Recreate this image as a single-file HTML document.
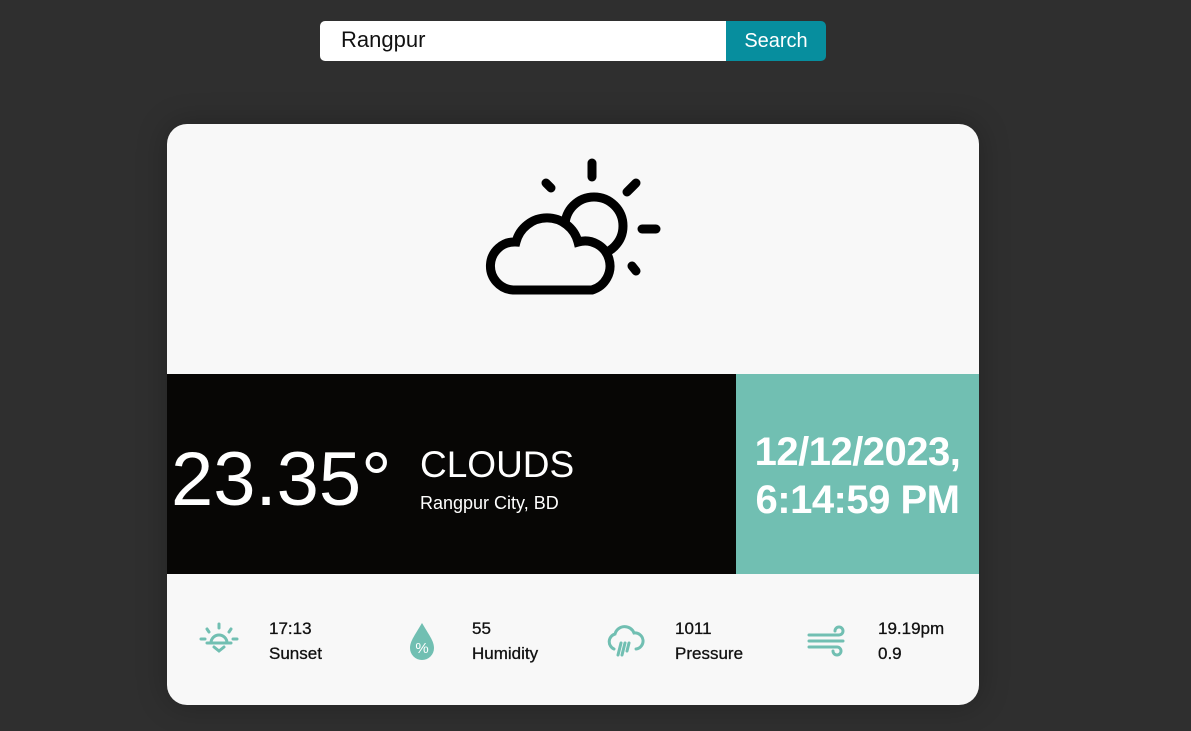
<!DOCTYPE html>
<html><head><style>
*{margin:0;padding:0;box-sizing:border-box}
body{width:1191px;height:731px;background:#2f2f2f;font-family:"Liberation Sans",sans-serif;position:relative;overflow:hidden}
.search{position:absolute;left:320px;top:21px;width:406px;height:40px;background:#fff;border-radius:5px 0 0 5px;font-size:22px;padding:6px 0 0 21px;color:#111}
.btn{position:absolute;left:726px;top:21px;width:100px;height:40px;background:#078e9e;border-radius:0 5px 5px 0;color:#fff;font-size:20px;text-align:center;line-height:40px}
.card{position:absolute;left:167px;top:124px;width:812px;height:581px;background:#f8f8f8;border-radius:20px;overflow:hidden;box-shadow:0 0 30px rgba(0,0,0,.25)}
.blk{position:absolute;left:0;top:250px;width:569px;height:200px;background:#070605;color:#fff}
.teal{position:absolute;left:569px;top:250px;width:243px;height:200px;background:#71bfb2;color:#fff;font-weight:bold;font-size:40px;text-align:center;line-height:48px;padding-top:54px;letter-spacing:-0.5px}
.temp{position:absolute;left:4px;top:62px;font-size:76px;font-weight:300}
.cond{position:absolute;left:253px;top:70px;font-size:37px;font-weight:300}
.city{position:absolute;left:253px;top:119px;font-size:18px}
.it{position:absolute;top:492px;font-size:17px;line-height:25px;color:#111;-webkit-text-stroke:0.3px #111}
.ic{position:absolute;top:497px}
</style></head><body>
<div class="search">Rangpur</div><div class="btn">Search</div>
<div class="card">
<svg style="position:absolute;left:0;top:0" width="812" height="250">
<g stroke="#000" stroke-width="9" stroke-linecap="round" fill="none" transform="translate(-167,-124)">
<line x1="592" y1="163" x2="592" y2="177"/>
<line x1="546" y1="183" x2="551" y2="188"/>
<line x1="627" y1="192" x2="636" y2="183"/>
<line x1="642" y1="229" x2="656" y2="229"/>
<line x1="632" y1="266" x2="636" y2="271"/>
<circle cx="594" cy="226" r="29"/>
<path d="M513,290 A24,24 0 0 1 516,242 A32,32 0 0 1 578,242 A25,25 0 0 1 592,290 Z" fill="#f8f8f8"/>
</g></svg>
<div class="blk"><div class="temp">23.35°</div><div class="cond">CLOUDS</div><div class="city">Rangpur City, BD</div></div>
<div class="teal">12/12/2023,<br>6:14:59 PM</div>
<svg class="ic" style="left:32px" width="40" height="40" viewBox="0 0 40 40"><g stroke="#71bfb2" stroke-width="3" fill="none" stroke-linecap="round"><path d="M12,22 A8,8 0 1 1 28,22"/><line x1="8" y1="22" x2="32" y2="22"/><line x1="20" y1="3" x2="20" y2="7"/><line x1="8" y1="8" x2="10" y2="11"/><line x1="32" y1="8" x2="30" y2="11"/><line x1="2" y1="18" x2="6" y2="18"/><line x1="34" y1="18" x2="38" y2="18"/><path d="M15,26 L20,30 L25,26"/></g></svg>
<div class="it" style="left:102px">17:13<br>Sunset</div>
<svg class="ic" style="left:238px" width="34" height="40" viewBox="0 0 34 40"><path d="M17,2 C10,14 5,20 5,27 A12,12 0 0 0 29,27 C29,20 24,14 17,2Z" fill="#71bfb2"/><text x="17" y="32" font-size="15" fill="#fff" text-anchor="middle" font-family="Liberation Sans">%</text></svg>
<div class="it" style="left:305px">55<br>Humidity</div>
<svg class="ic" style="left:438px" width="40" height="40" viewBox="0 0 40 40"><g stroke="#71bfb2" stroke-width="3" fill="none" stroke-linecap="round"><path d="M9,28 A8,8 0 0 1 10,13 A10,10 0 0 1 29,12 A8,8 0 0 1 31,28"/><line x1="16" y1="22" x2="13" y2="34"/><line x1="20" y1="22" x2="17" y2="34"/><line x1="24" y1="22" x2="22" y2="30"/></g></svg>
<div class="it" style="left:508px">1011<br>Pressure</div>
<svg class="ic" style="left:638px" width="44" height="40" viewBox="0 0 44 40"><g stroke="#71bfb2" stroke-width="3" fill="none" stroke-linecap="round"><path d="M4,14 H34 A4,4 0 1 0 30,10"/><path d="M4,20 H38"/><path d="M4,26 H32 A4,4 0 1 1 28,30"/></g></svg>
<div class="it" style="left:711px">19.19pm<br>0.9</div>
</div>
</body></html>
